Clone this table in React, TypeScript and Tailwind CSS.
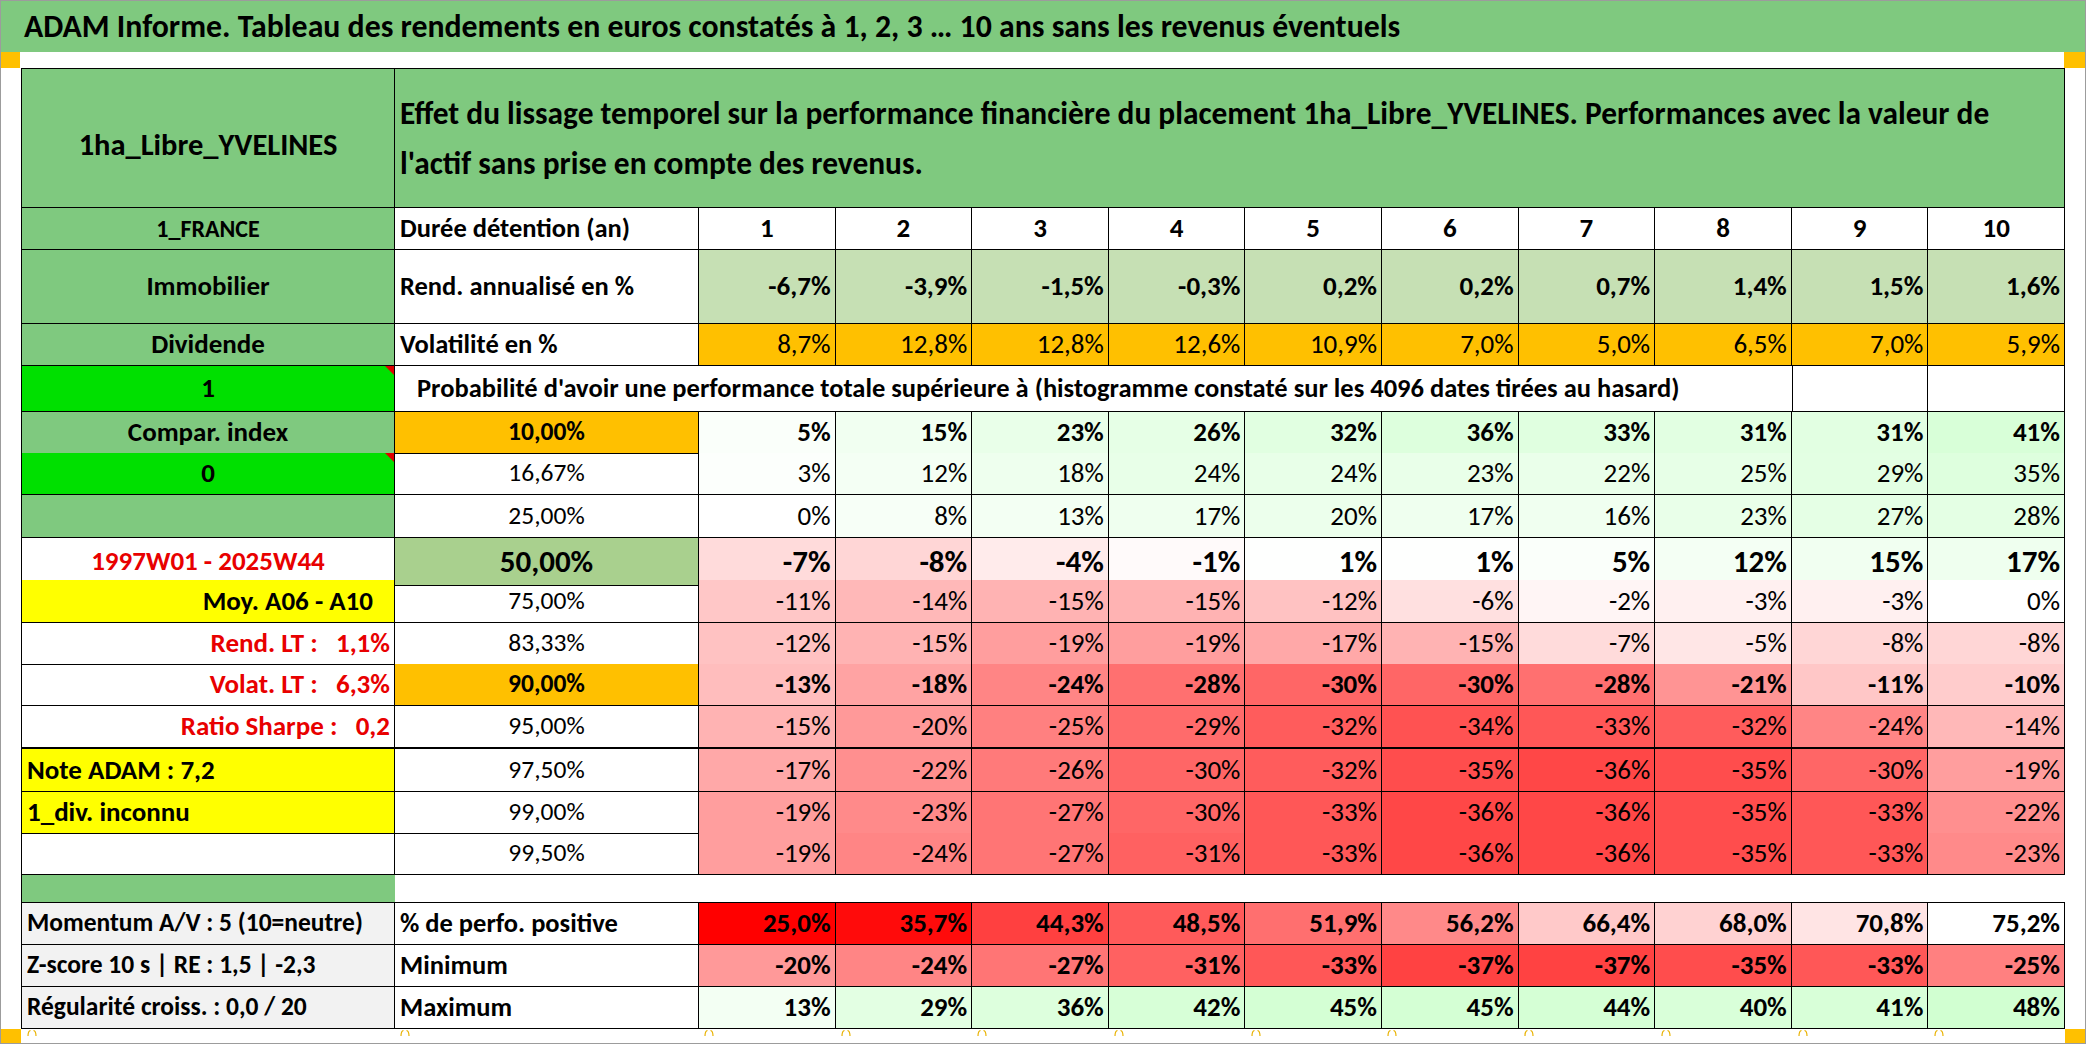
import React from "react";

const COLS = "grid grid-cols-[373px_304px_repeat(10,minmax(0,1fr))]";

const heat = (v: number) => {
  if (v < 0) {
    const g = Math.max(0, Math.round(255 + 5.1 * v));
    return `rgb(255,${g},${g})`;
  }
  const rb = Math.max(0, Math.round(255 - 0.95 * v));
  return `rgb(${rb},255,${rb})`;
};
const posScale = (v: number) => {
  const g = Math.max(0, Math.min(255, Math.round((255 * (v - 34)) / 41.2)));
  return `rgb(255,${g},${g})`;
};

function Cell({
  className = "",
  style,
  children,
}: {
  className?: string;
  style?: React.CSSProperties;
  children?: React.ReactNode;
}) {
  return (
    <div
      className={`relative flex items-center whitespace-pre border-r border-b border-black min-w-0 ${className}`}
      style={style}
    >
      {children}
    </div>
  );
}

function Tri() {
  return (
    <div className="absolute right-0 top-0 w-0 h-0 border-t-[9px] border-l-[9px] border-t-[#e00000] border-l-transparent" />
  );
}

function Nums({
  vals,
  fmt,
  color,
  bold,
  big,
  thick,
}: {
  vals: number[];
  fmt?: (v: number) => string;
  color: (v: number) => string;
  bold?: boolean;
  big?: boolean;
  thick?: boolean;
}) {
  return (
    <>
      {vals.map((v, i) => (
        <Cell
          key={i}
          className={`justify-end pr-[4px] ${bold ? "font-bold" : ""} ${big ? "text-[31px]" : "text-[27px]"} ${thick ? "border-b-2" : ""}`}
          style={{ backgroundColor: color(v) }}
        >
          {fmt ? fmt(v) : `${v}%`}
        </Cell>
      ))}
    </>
  );
}

type PRow = {
  h: string;
  c0: React.ReactNode;
  c0Cls: string;
  tri?: boolean;
  lbl: string;
  lblCls: string;
  vals: number[];
  bold?: boolean;
  big?: boolean;
  thick?: boolean;
};

const pctRows: PRow[] = [
  { h: "h-[41px]", c0: "Compar. index", c0Cls: "bg-[#7fc97f] justify-center", lbl: "10,00%", lblCls: "bg-[#ffc000] font-bold", vals: [5, 15, 23, 26, 32, 36, 33, 31, 31, 41], bold: true },
  { h: "h-[42px]", c0: "0", c0Cls: "bg-[#00e000] justify-center", tri: true, lbl: "16,67%", lblCls: "", vals: [3, 12, 18, 24, 24, 23, 22, 25, 29, 35] },
  { h: "h-[43px]", c0: "", c0Cls: "bg-[#7fc97f]", lbl: "25,00%", lblCls: "", vals: [0, 8, 13, 17, 20, 17, 16, 23, 27, 28] },
  { h: "h-[42px]", c0: "1997W01 - 2025W44", c0Cls: "justify-center text-[#e80000]", lbl: "50,00%", lblCls: "bg-[#a9d08e] font-bold text-[31px]", vals: [-7, -8, -4, -1, 1, 1, 5, 12, 15, 17], bold: true, big: true },
  { h: "h-[43px]", c0: "Moy. A06 - A10", c0Cls: "bg-[#ffff00] justify-end pr-[21px]", lbl: "75,00%", lblCls: "", vals: [-11, -14, -15, -15, -12, -6, -2, -3, -3, 0] },
  { h: "h-[41px]", c0: "Rend. LT :   1,1%", c0Cls: "justify-end pr-[4px] text-[#e80000]", lbl: "83,33%", lblCls: "", vals: [-12, -15, -19, -19, -17, -15, -7, -5, -8, -8] },
  { h: "h-[42px]", c0: "Volat. LT :   6,3%", c0Cls: "justify-end pr-[4px] text-[#e80000]", lbl: "90,00%", lblCls: "bg-[#ffc000] font-bold", vals: [-13, -18, -24, -28, -30, -30, -28, -21, -11, -10], bold: true },
  { h: "h-[43px]", c0: "Ratio Sharpe :   0,2", c0Cls: "justify-end pr-[4px] text-[#e80000]", lbl: "95,00%", lblCls: "", vals: [-15, -20, -25, -29, -32, -34, -33, -32, -24, -14], thick: true },
  { h: "h-[43px]", c0: "Note ADAM : 7,2", c0Cls: "bg-[#ffff00] pl-[5px]", lbl: "97,50%", lblCls: "", vals: [-17, -22, -26, -30, -32, -35, -36, -35, -30, -19] },
  { h: "h-[41px]", c0: "1_div. inconnu", c0Cls: "bg-[#ffff00] pl-[5px]", lbl: "99,00%", lblCls: "", vals: [-19, -23, -27, -30, -33, -36, -36, -35, -33, -22] },
  { h: "h-[42px]", c0: "", c0Cls: "", lbl: "99,50%", lblCls: "", vals: [-19, -24, -27, -31, -33, -36, -36, -35, -33, -23] },
];

const rend = ["-6,7%", "-3,9%", "-1,5%", "-0,3%", "0,2%", "0,2%", "0,7%", "1,4%", "1,5%", "1,6%"];
const vol = ["8,7%", "12,8%", "12,8%", "12,6%", "10,9%", "7,0%", "5,0%", "6,5%", "7,0%", "5,9%"];
const positive = [25.0, 35.7, 44.3, 48.5, 51.9, 56.2, 66.4, 68.0, 70.8, 75.2];
const minimum = [-20, -24, -27, -31, -33, -37, -37, -35, -33, -25];
const maximum = [13, 29, 36, 42, 45, 45, 44, 40, 41, 48];

const fmt1 = (v: number) => `${v.toFixed(1).replace(".", ",")}%`;

function Arc() {
  return (
    <svg width="12" height="8" viewBox="0 0 12 8" className="ml-[5px]">
      <path d="M2 7 Q2 2 4.5 1.5" stroke="#e9b200" strokeWidth="1.2" fill="none" />
      <path d="M10 7 Q10 2 7.5 1.5" stroke="#e9b200" strokeWidth="1.2" fill="none" />
    </svg>
  );
}

export default function App() {
  const lblBase = "justify-center text-[25.5px]";
  return (
    <div className="w-[2086px] h-[1044px] border border-[#9c9c9c] bg-white overflow-hidden font-['Calibri','Carlito','Lato',sans-serif] text-black">
      {/* title */}
      <div className="h-[51px] bg-[#7fc97f] flex items-center pl-[23px] text-[31.8px] font-bold whitespace-nowrap">
        ADAM Informe. Tableau des rendements en euros constatés à 1, 2, 3 … 10 ans sans les revenus éventuels
      </div>
      <div className="h-[16px] flex justify-between">
        <div className="w-[19px] h-full bg-[#ffc000]" />
        <div className="w-[21px] h-full bg-[#ffc000]" />
      </div>

      <div className="flex">
        <div className="w-[20px]" />
        <div className="w-[2044px] border-l border-t border-black">
          {/* header */}
          <div className={`${COLS} h-[139px] bg-[#7fc97f]`}>
            <Cell className="justify-center text-[30.5px] font-bold pt-[14px]">1ha_Libre_YVELINES</Cell>
            <Cell className="col-span-11 pl-[5px] text-[31.4px] font-bold leading-[50px] whitespace-normal">
              <div>
                Effet du lissage temporel sur la performance financière du placement 1ha_Libre_YVELINES. Performances avec la valeur de
                <br />
                l'actif sans prise en compte des revenus.
              </div>
            </Cell>
          </div>

          {/* durée */}
          <div className={`${COLS} h-[42px] font-bold text-[26.5px]`}>
            <Cell className="bg-[#7fc97f] justify-center text-[24px]">1_FRANCE</Cell>
            <Cell className="pl-[5px]">Durée détention (an)</Cell>
            {[1, 2, 3, 4, 5, 6, 7, 8, 9, 10].map((n) => (
              <Cell key={n} className="justify-center text-[27px]">
                {n}
              </Cell>
            ))}
          </div>

          {/* rend annualisé */}
          <div className={`${COLS} h-[74px] font-bold text-[26.5px]`}>
            <Cell className="bg-[#7fc97f] justify-center text-[27px]">Immobilier</Cell>
            <Cell className="pl-[5px]">Rend. annualisé en %</Cell>
            {rend.map((r, i) => (
              <Cell key={i} className="justify-end pr-[4px] bg-[#c6e0b4] text-[27px]">
                {r}
              </Cell>
            ))}
          </div>

          {/* volatilité */}
          <div className={`${COLS} h-[42px] text-[27px]`}>
            <Cell className="bg-[#7fc97f] justify-center font-bold text-[27px]">Dividende</Cell>
            <Cell className="pl-[5px] font-bold text-[26.5px]">Volatilité en %</Cell>
            {vol.map((r, i) => (
              <Cell key={i} className="justify-end pr-[4px] bg-[#ffc000]">
                {r}
              </Cell>
            ))}
          </div>

          {/* probabilité */}
          <div className={`${COLS} h-[46px] text-[26.5px] font-bold`}>
            <Cell className="bg-[#00e000] justify-center text-[27px]">
              1
              <Tri />
            </Cell>
            <Cell className="col-span-9 pl-[22px] border-r-0">
              Probabilité d'avoir une performance totale supérieure à (histogramme constaté sur les 4096 dates tirées au hasard)
            </Cell>
            <Cell className="border-l border-black" />
            <Cell />
          </div>

          {pctRows.map((r, idx) => (
            <div key={idx} className={`${COLS} ${r.h}`}>
              <Cell className={`font-bold text-[27px] ${r.c0Cls} ${r.thick ? "border-b-2" : ""}`}>
                {r.c0}
                {r.tri ? <Tri /> : null}
              </Cell>
              <Cell className={`${lblBase} ${r.lblCls} ${r.thick ? "border-b-2" : ""}`}>{r.lbl}</Cell>
              <Nums vals={r.vals} color={heat} bold={r.bold} big={r.big} thick={r.thick} />
            </div>
          ))}

          {/* green band */}
          <div className={`${COLS} h-[28px]`}>
            <Cell className="bg-[#7fc97f] border-r-0" />
            <Cell className="col-span-11 border-r-0" />
          </div>

          {/* momentum */}
          <div className={`${COLS} h-[42px]`}>
            <Cell className="bg-[#f2f2f2] pl-[5px] font-bold text-[25.5px]">Momentum A/V : 5 (10=neutre)</Cell>
            <Cell className="pl-[5px] font-bold text-[26.5px]">% de perfo. positive</Cell>
            <Nums vals={positive} color={posScale} fmt={fmt1} bold />
          </div>
          <div className={`${COLS} h-[42px]`}>
            <Cell className="bg-[#f2f2f2] pl-[5px] font-bold text-[25.5px]">Z-score 10 s | RE : 1,5 | -2,3</Cell>
            <Cell className="pl-[5px] font-bold text-[26.5px]">Minimum</Cell>
            <Nums vals={minimum} color={heat} bold />
          </div>
          <div className={`${COLS} h-[42px]`}>
            <Cell className="bg-[#f2f2f2] pl-[5px] font-bold text-[25.5px]">Régularité croiss. : 0,0 / 20</Cell>
            <Cell className="pl-[5px] font-bold text-[26.5px]">Maximum</Cell>
            <Nums vals={maximum} color={heat} bold />
          </div>
        </div>
      </div>

      {/* bottom strip */}
      <div className="h-[14px] flex">
        <div className="w-[20px] h-full bg-[#ffc000]" />
        <div className={`${COLS} w-[2044px] h-full`}>
          {Array.from({ length: 12 }).map((_, i) => (
            <div key={i} className="flex items-start">
              <Arc />
            </div>
          ))}
        </div>
        <div className="w-[20px] h-full bg-[#ffc000]" />
      </div>
    </div>
  );
}
